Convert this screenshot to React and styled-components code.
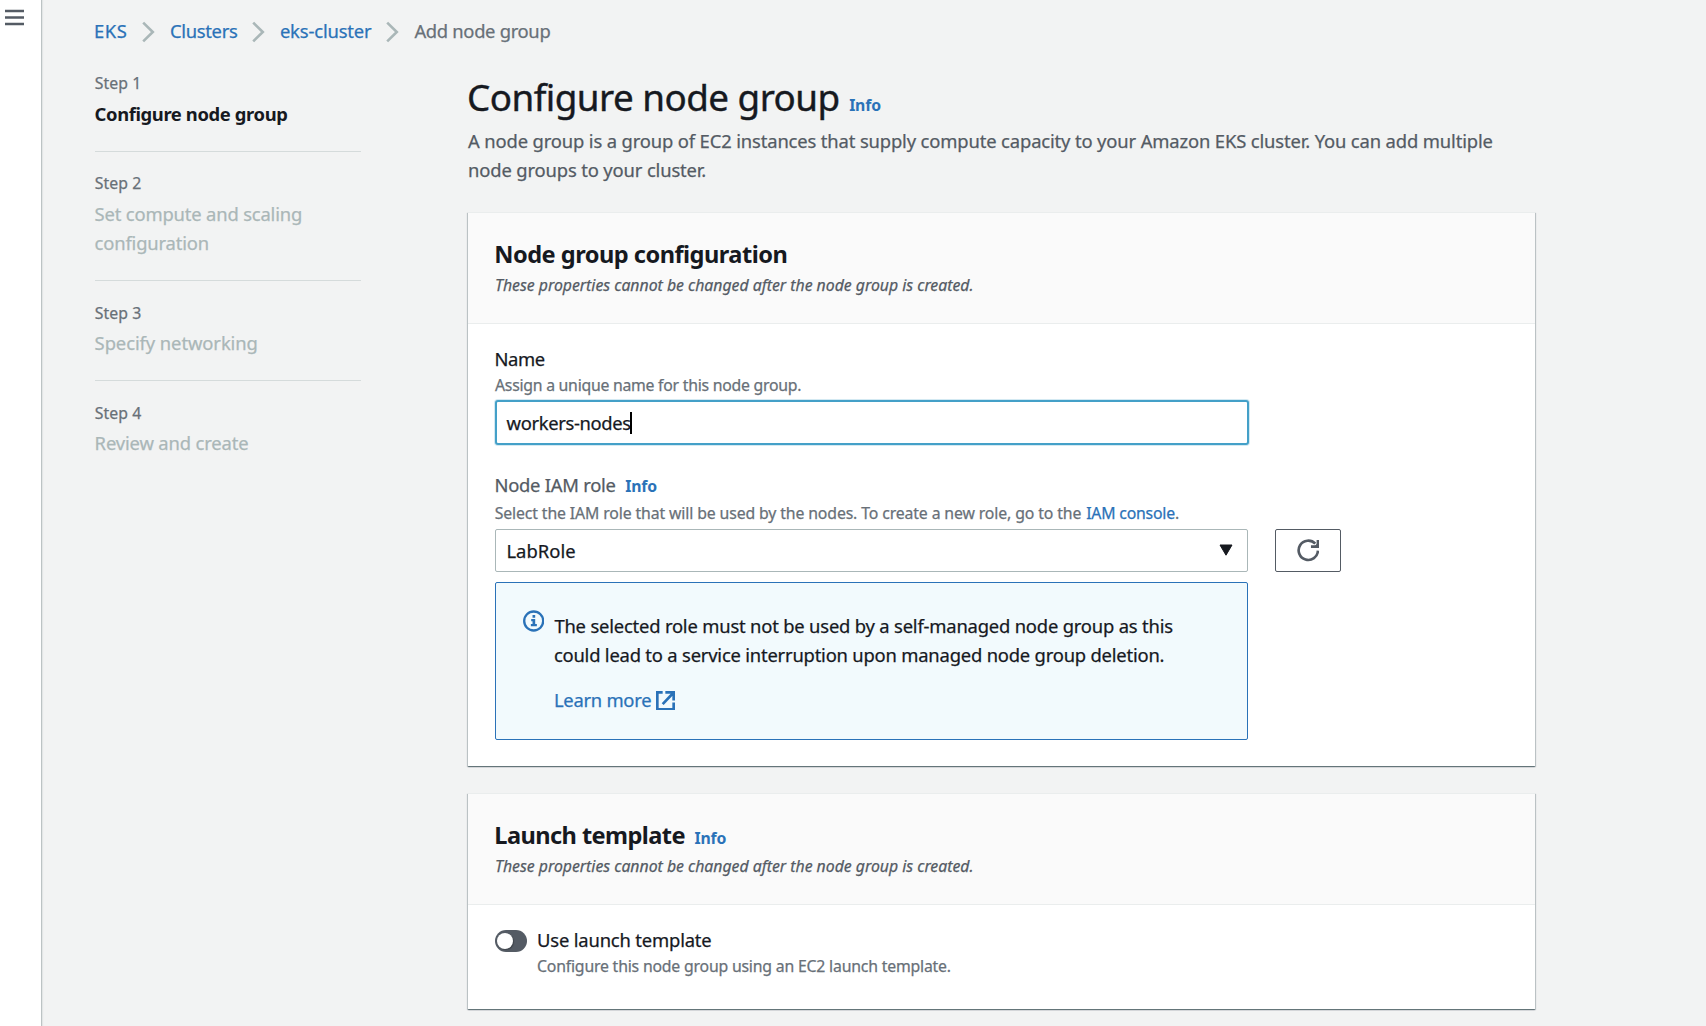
import React from "react";
import styled, { createGlobalStyle } from "styled-components";

const color = {
  page: "#f2f3f3",
  text: "#16191f",
  body: "#545b64",
  muted: "#687078",
  disabled: "#aab7b8",
  line: "#d5dbdb",
  link: "#2a72b8",
  info: "#2a72b8",
};

const GlobalStyle = createGlobalStyle`
  * { box-sizing: border-box; }
  body {
    margin: 0;
    background: ${color.page};
    color: ${color.text};
    font-family: "Noto Sans", "Open Sans", sans-serif;
    font-size: 18.4px;
    line-height: 29px;
    -webkit-text-stroke: 0.25px;
    overflow: hidden;
  }
`;

const Shell = styled.div`
  display: flex;
  width: 1706px;
  height: 1026px;
  overflow: hidden;
`;

const Rail = styled.nav`
  flex: none;
  width: 42px;
  padding: 9px 0 0 5px;
  background: #fff;
  border-right: 1px solid #bcc3c4;
  box-shadow: 1px 0 1px rgba(0, 28, 36, 0.06);
  & > svg {
    display: block;
  }
`;

const Page = styled.div`
  flex: 1;
  padding: 16px 0 0 53px;
`;

const Text = styled.span`
  display: ${(p) => (p.$block ? "block" : "inline-block")};
  margin-left: ${(p) => p.$dx ?? 0}px;
  letter-spacing: ${(p) => p.$ls ?? -0.15}px;
  color: ${(p) => p.$color ?? "inherit"};
  white-space: nowrap;
`;

const Small = styled(Text)`
  font-size: 15.8px;
  line-height: 24px;
  color: ${(p) => p.$color ?? color.muted};
`;

const Link = styled(Text).attrs({ as: "a" })`
  color: ${color.link};
`;

const InfoLink = styled.a`
  margin-left: 9.5px;
  font-size: 15.8px;
  font-weight: 700;
  line-height: 20px;
  letter-spacing: -0.17px;
  -webkit-text-stroke: 0;
  color: ${color.link};
`;

const Crumbs = styled.div`
  display: flex;
  height: 29px;
`;

const Separator = styled.svg`
  flex: none;
  width: 13px;
  height: 22px;
  margin: 5px 16px 0 14.4px;
`;

const Columns = styled.div`
  display: flex;
`;

const Steps = styled.ol`
  flex: none;
  width: 266px;
  margin: 26px 107px 0 0;
  padding: 0;
  list-style: none;
`;

const Step = styled.li`
  padding-bottom: 23px;
  & + & {
    padding-top: 19px;
    border-top: 1px solid ${color.line};
  }
  &:nth-child(n + 3) {
    padding-top: 20px;
  }
  &:nth-child(n + 3) > div {
    margin-top: 3px;
  }
`;

const StepTitle = styled.div`
  margin: 4px 0 0 -0.4px;
  color: ${(p) => (p.$active ? color.text : color.disabled)};
  font-weight: ${(p) => (p.$active ? 700 : 400)};
  -webkit-text-stroke: ${(p) => (p.$active ? 0 : 0.25)}px;
  letter-spacing: ${(p) => p.$ls}px;
  white-space: pre-line;
`;

const Content = styled.main`
  width: 1067px;
  padding-top: 28px;
`;

const PageTitle = styled.h1`
  display: flex;
  align-items: baseline;
  margin: 0 0 5px -1px;
  height: 48px;
  font-size: 36.8px;
  font-weight: 400;
  line-height: 48px;
  letter-spacing: -0.53px;
  -webkit-text-stroke: 0.4px;
`;

const Description = styled.p`
  margin: 0 0 28px;
  color: ${color.body};
  letter-spacing: -0.14px;
`;

const Card = styled.section`
  margin-bottom: 27px;
  background: #fff;
  border-top: 1px solid #eaeded;
  box-shadow: 0 1px 1px 0 rgba(0, 28, 36, 0.4), 1px 1px 1px 0 rgba(0, 28, 36, 0.17),
    -1px 1px 1px 0 rgba(0, 28, 36, 0.17);
`;

const CardHeader = styled.header`
  padding: 26px 27px;
  background: #fafafa;
  border-bottom: 1px solid #eaeded;
`;

const CardTitle = styled.h2`
  display: flex;
  align-items: baseline;
  height: 30px;
  margin: 0 0 4px -0.7px;
  font-size: 23.6px;
  font-weight: 700;
  line-height: 30px;
  letter-spacing: ${(p) => p.$ls}px;
  -webkit-text-stroke: 0;
`;

const CardNote = styled.div`
  font-size: 15.8px;
  font-style: italic;
  line-height: 24px;
  color: ${color.body};
`;

const CardBody = styled.div`
  padding: 20px 27px ${(p) => p.$bottom}px;
`;

const Label = styled.div`
  display: flex;
  align-items: baseline;
  height: 29px;
`;

const NameInput = styled.div`
  display: flex;
  align-items: center;
  width: 754px;
  height: 45px;
  margin: 3px 0 25px -0.4px;
  padding-left: 10px;
  background: #fff;
  border: 2px solid #44a0c8;
  border-radius: 3px;
  box-shadow: 0 0 0 1px #d3e9f2;
`;

const Caret = styled.span`
  width: 2px;
  height: 22px;
  margin-left: -1px;
  background: #000;
`;

const Hint = styled.div`
  display: flex;
  height: 24px;
  margin-top: ${(p) => p.$top ?? 0}px;
`;

const RoleRow = styled.div`
  display: flex;
  gap: 27px;
  margin: 4px 0 10px;
`;

const SelectBox = styled.div`
  display: flex;
  align-items: center;
  justify-content: space-between;
  width: 753px;
  height: 43px;
  padding: 0 14px 1px 11px;
  border: 1px solid #aab7b8;
  border-radius: 2px;
`;

const RefreshButton = styled.button`
  display: flex;
  align-items: center;
  justify-content: center;
  width: 66px;
  height: 43px;
  padding: 0;
  background: #fff;
  border: 1px solid ${color.body};
  border-radius: 2px;
`;

const Alert = styled.div`
  display: flex;
  width: 753px;
  height: 158px;
  padding: 28px 27px 25px;
  background: #f2fafd;
  border: 1px solid ${color.info};
  border-radius: 2px;
  & > svg {
    flex: none;
    margin: -1px 10px 0 0;
  }
`;

const AlertLink = styled.div`
  display: flex;
  align-items: center;
  gap: 5px;
  margin-top: 16px;
  & > svg {
    margin-top: 2px;
  }
`;

const ToggleRow = styled.div`
  display: flex;
  gap: 10px;
`;

const Toggle = styled.div`
  flex: none;
  width: 32px;
  height: 22px;
  margin-top: 5px;
  padding: 3px 2px;
  background: ${color.body};
  border-radius: 11px;
`;

const Knob = styled.div`
  width: 16px;
  height: 16px;
  background: #fff;
  border-radius: 50%;
  box-shadow: 1px 1px 1px rgba(0, 0, 0, 0.25);
`;

const MenuIcon = () => (
  <svg width="19" height="17" viewBox="0 0 19 17" fill="none" stroke={color.body} strokeWidth="2.4">
    <path d="M0 2h19M0 8.5h19M0 15h19" />
  </svg>
);

const Chevron = () => (
  <Separator viewBox="0 0 13 22" fill="none" stroke={color.disabled} strokeWidth="2.6">
    <path d="M1.2 1.6L10.8 11L1.2 20.4" />
  </Separator>
);

const RefreshIcon = () => (
  <svg width="22.6" height="22.3" viewBox="80 57 68 67" fill="none" stroke={color.body} strokeWidth="8">
    <path d="M143 92A29 29 0 1 1 135 71" />
    <path d="M143 60V80H122" />
    <path d="M143 68V80H131Z" fill={color.body} stroke="none" />
  </svg>
);

const InfoIcon = () => (
  <svg width="21.4" height="22" viewBox="23.5 30 64 66" fill="none" stroke={color.info} strokeWidth="7">
    <circle cx="55.5" cy="63" r="28.5" />
    <path d="M52 45h8v8h-8zM48 57h12v15h5v7H47v-7h5v-8h-4z" fill={color.info} stroke="none" />
  </svg>
);

const ExternalIcon = () => (
  <svg width="19" height="19.7" viewBox="427 273.5 57 59" fill="none" stroke={color.info} strokeWidth="8">
    <path d="M447 277.5H431V328.5H480V308M455 277.5H480V302M480 278L447 313" />
  </svg>
);

const steps = [
  { title: "Configure node group", ls: -0.38, active: true },
  { title: "Set compute and scaling\nconfiguration", ls: -0.17 },
  { title: "Specify networking", ls: -0.08 },
  { title: "Review and create", ls: -0.15 },
];

export default function App() {
  return (
    <Shell>
      <GlobalStyle />
      <Rail>
        <MenuIcon />
      </Rail>
      <Page>
        <Crumbs>
          <Link $dx={-0.9} $ls={0.5}>EKS</Link>
          <Chevron />
          <Link $dx={-0.8} $ls={-0.3}>Clusters</Link>
          <Chevron />
          <Link $dx={-1} $ls={-0.15}>eks-cluster</Link>
          <Chevron />
          <Text $dx={-0.5} $ls={-0.32} $color={color.muted}>Add node group</Text>
        </Crumbs>
        <Columns>
          <Steps>
            {steps.map((s, i) => (
              <Step key={s.title}>
                <Small $block $dx={-0.3} $ls={0.1}>Step {i + 1}</Small>
                <StepTitle $active={s.active} $ls={s.ls}>{s.title}</StepTitle>
              </Step>
            ))}
          </Steps>
          <Content>
            <PageTitle>
              Configure node group <InfoLink>Info</InfoLink>
            </PageTitle>
            <Description>
              A node group is a group of EC2 instances that supply compute capacity to your Amazon EKS
              cluster. You can add multiple
              <br />
              node groups to your cluster.
            </Description>

            <Card>
              <CardHeader>
                <CardTitle $ls={-0.52}>Node group configuration</CardTitle>
                <CardNote>These properties cannot be changed after the node group is created.</CardNote>
              </CardHeader>
              <CardBody $bottom={26}>
                <Label>
                  <Text $dx={-0.6} $ls={-0.35}>Name</Text>
                </Label>
                <Hint>
                  <Small $ls={-0.25}>Assign a unique name for this node group.</Small>
                </Hint>
                <NameInput>
                  <Text $ls={-0.35}>workers-nodes</Text>
                  <Caret />
                </NameInput>
                <Label>
                  <Text $dx={-0.6} $ls={-0.25} $color={color.body}>Node IAM role</Text>
                  <InfoLink>Info</InfoLink>
                </Label>
                <Hint $top={2}>
                  <Small $dx={-0.3} $ls={-0.12}>
                    Select the IAM role that will be used by the nodes. To create a new role, go to the{" "}
                    <Link $dx={1} $ls={-0.2}>IAM console</Link>.
                  </Small>
                </Hint>
                <RoleRow>
                  <SelectBox>
                    <Text $dx={-0.6} $ls={0.05}>LabRole</Text>
                    <svg width="14" height="12" viewBox="0 0 14 12">
                      <path d="M1 1H13L7 11.2Z" fill={color.text} stroke={color.text} strokeLinejoin="round" />
                    </svg>
                  </SelectBox>
                  <RefreshButton aria-label="Refresh">
                    <RefreshIcon />
                  </RefreshButton>
                </RoleRow>
                <Alert>
                  <InfoIcon />
                  <div>
                    <Text $block $ls={-0.19}>
                      The selected role must not be used by a self-managed node group as this
                    </Text>
                    <Text $block $dx={-0.5} $ls={-0.2}>
                      could lead to a service interruption upon managed node group deletion.
                    </Text>
                    <AlertLink>
                      <Link $dx={-0.4} $ls={-0.27}>Learn more</Link>
                      <ExternalIcon />
                    </AlertLink>
                  </div>
                </Alert>
              </CardBody>
            </Card>

            <Card>
              <CardHeader>
                <CardTitle $ls={-0.58}>
                  Launch template <InfoLink>Info</InfoLink>
                </CardTitle>
                <CardNote>These properties cannot be changed after the node group is created.</CardNote>
              </CardHeader>
              <CardBody $bottom={31}>
                <ToggleRow>
                  <Toggle>
                    <Knob />
                  </Toggle>
                  <div>
                    <Text $block $ls={-0.17}>Use launch template</Text>
                    <Small $block $ls={-0.19}>Configure this node group using an EC2 launch template.</Small>
                  </div>
                </ToggleRow>
              </CardBody>
            </Card>
          </Content>
        </Columns>
      </Page>
    </Shell>
  );
}
